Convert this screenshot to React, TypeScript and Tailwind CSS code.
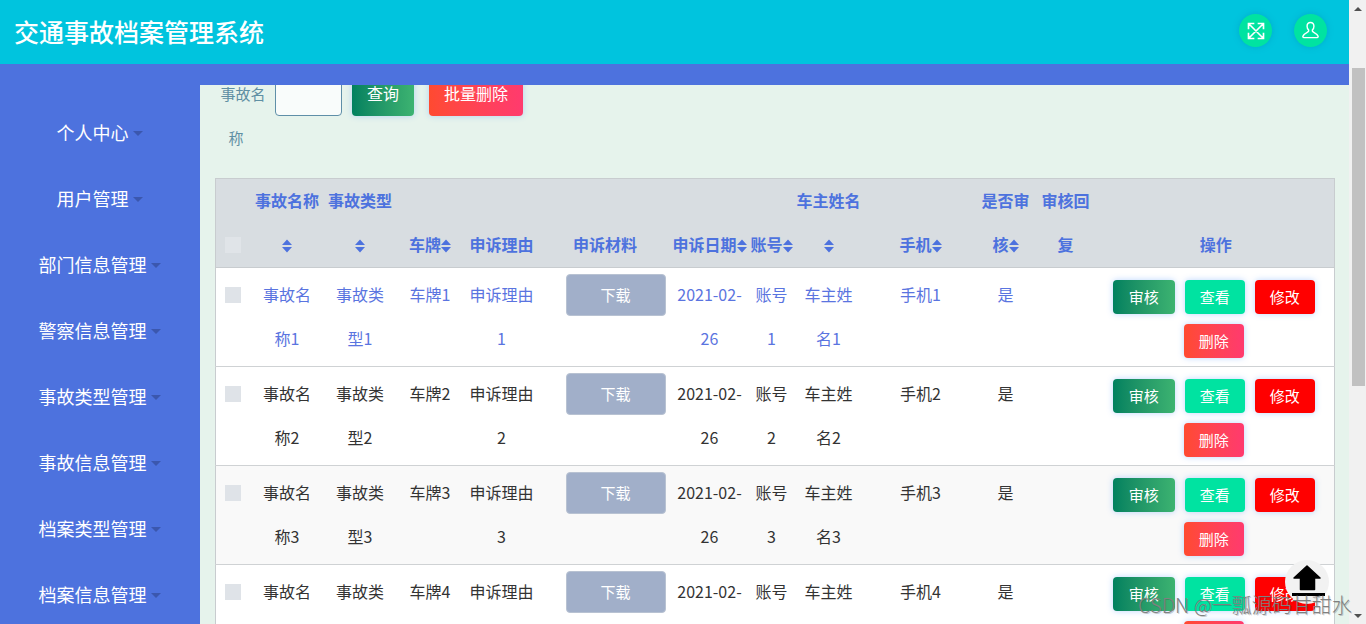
const menus = ['个人中心', '用户管理', '部门信息管理', '警察信息管理', '事故类型管理', '事故信息管理', '档案类型管理', '档案信息管理']
const rows = [1, 2, 3, 4]

function SortIcon() {
  return (
    <svg viewBox="0 0 10 14" className="inline-block w-[10px] h-[14px] align-[-2px] fill-current">
      <path d="M5 0.5 L10 6 H0 Z M0 8 H10 L5 13.5 Z" />
    </svg>
  )
}

function HeadCell({ children }: { children: React.ReactNode }) {
  return <th className="font-bold text-center align-bottom p-0 pb-[1px] leading-[43.5px]">{children}</th>
}

function ActionButton({ label, className }: { label: string; className: string }) {
  return (
    <button className={`h-[34px] pb-[2px] rounded-[4px] text-[15px] leading-none text-white shadow-[0_0_6px_rgba(64,140,255,0.35)] ${className}`}>
      {label}
    </button>
  )
}

function Row({ n }: { n: number }) {
  const rowColor = n === 1 ? 'text-[#5a74e0] bg-white' : n === 3 ? 'text-[#333] bg-[#f9f9f9]' : 'text-[#333] bg-white'
  return (
    <tr className={`h-[99px] border-b border-[#cfd2d4] text-center align-top leading-[44px] ${rowColor}`}>
      <td className="p-0 pl-[9px] pt-[19px] text-left">
        <div className="w-[16px] h-[16px] bg-[#dfe3e8]"></div>
      </td>
      <td className="p-0 pt-[4px]">事故名<br />称{n}</td>
      <td className="p-0 pt-[4px]">事故类<br />型{n}</td>
      <td className="p-0 pt-[4px]">车牌{n}</td>
      <td className="p-0 pt-[4px]">申诉理由<br />{n}</td>
      <td className="p-0 pl-[21px] pt-[6px]">
        <button className="block mx-auto w-[100px] h-[42px] pb-[2px] rounded-[4px] bg-[#a1afc9] border border-[#b8c2d2] text-[15px] leading-none text-white">下载</button>
      </td>
      <td className="p-0 pt-[4px]">2021-02-<br />26</td>
      <td className="p-0 pt-[4px]">账号<br />{n}</td>
      <td className="p-0 pt-[4px]">车主姓<br />名{n}</td>
      <td className="p-0 pt-[4px]">手机{n}</td>
      <td className="p-0 pt-[4px]">是</td>
      <td className="p-0"></td>
      <td className="p-0 pt-[12px] pr-[4px]">
        <div className="flex flex-wrap justify-center gap-[10px] leading-none">
          <ActionButton label="审核" className="w-[62px] bg-gradient-to-r from-[#00815f] to-[#3cb371]" />
          <ActionButton label="查看" className="w-[60px] bg-[#00e3a1]" />
          <ActionButton label="修改" className="w-[60px] bg-[#ff0000]" />
          <ActionButton label="删除" className="w-[60px] bg-gradient-to-r from-[#ff4a30] to-[#ff3a6e]" />
        </div>
      </td>
    </tr>
  )
}

export default function App() {
  return (
    <div className="relative h-[624px] w-[1366px] overflow-hidden flex font-['Noto_Sans_CJK_SC','Liberation_Sans',sans-serif]">
      <div className="w-[1349px] flex flex-col">
        {/* Top bar */}
        <header className="h-[64px] shrink-0 bg-[#00c4de] flex items-center justify-between pl-[14px] pr-[22px]">
          <h1 className="text-[25px] font-medium text-white">交通事故档案管理系统</h1>
          <div className="flex gap-[22px] -mt-[3px]">
            <div className="w-[33px] h-[33px] rounded-full bg-[#00e3a1] shadow-[0_0_6px_rgba(0,130,170,0.35)] flex items-center justify-center text-white">
              <svg viewBox="0 0 24 24" className="w-[20px] h-[20px] fill-none stroke-current stroke-[2]">
                <path d="M3 3 L21 21 M21 3 L3 21 M3 10 V3 H10 M14 3 H21 V10 M3 14 V21 H10 M21 14 V21 H14" />
              </svg>
            </div>
            <div className="w-[33px] h-[33px] rounded-full bg-[#00e3a1] shadow-[0_0_6px_rgba(0,130,170,0.35)] flex items-center justify-center text-white">
              <svg viewBox="0 0 20 20" className="w-[19px] h-[19px] fill-none stroke-current stroke-[1.5]">
                <path d="M10 1.500c-2.300 0-3.600 1.700-3.600 4 0 1.600.6 3 1.600 3.900v1.400c0 .8-4.900 2-6 5.200-.2.7.2 1.500 1 1.500h14c.8 0 1.200-.8 1-1.500-1.100-3.200-6-4.400-6-5.200V9.400c1-.9 1.600-2.300 1.600-3.900 0-2.300-1.300-4-3.600-4z" />
              </svg>
            </div>
          </div>
        </header>
        <div className="h-[21px] shrink-0 bg-[#4d72de]"></div>

        <div className="flex flex-1 min-h-0">
          {/* Sidebar */}
          <aside className="w-[200px] shrink-0 bg-[#4d72de] pt-[14px]">
            {menus.map((m) => (
              <div key={m} className="h-[66px] flex items-center justify-center pr-[1px] text-[18px] text-white">
                {m}
                <span className="ml-[4px] mt-[2px] w-0 h-0 border-x-[5px] border-t-[5px] border-x-transparent border-t-[#3b57ae]"></span>
              </div>
            ))}
          </aside>

          {/* Main content, scrolled under the bar */}
          <main className="flex-1 min-w-0 overflow-hidden bg-[#e6f3ec]">
            <div className="-mt-[13px] pl-[15px]">
              <div className="flex items-start h-[88px] mb-[18px] text-[15px]">
                <label className="w-[50px] ml-[3px] text-center leading-[44px] text-[#5f8fa3]">
                  事故名<br />
                  <span className="inline-block mr-[14px]">称</span>
                </label>
                <input className="ml-[7px] w-[67px] h-[44px] rounded-[4px] border border-[#5f8fa8] bg-[#f9fcfb]" />
                <button className="ml-[10px] w-[62px] h-[44px] pb-[2px] rounded-[4px] text-[16px] leading-none text-white bg-gradient-to-r from-[#00815f] to-[#3cb371] shadow-[0_0_6px_rgba(64,140,255,0.3)]">查询</button>
                <button className="ml-[15px] w-[94px] h-[44px] pb-[2px] rounded-[4px] text-[16px] leading-none text-white bg-gradient-to-r from-[#ff4a30] to-[#ff3a6e] shadow-[0_0_6px_rgba(64,140,255,0.3)]">批量删除</button>
              </div>

              <table className="table-fixed border-collapse w-[1119px] border border-[#c8cccf] text-[16px]">
                <colgroup>
                  <col className="w-[36px]" />
                  <col className="w-[71px]" />
                  <col className="w-[75px]" />
                  <col className="w-[65px]" />
                  <col className="w-[78px]" />
                  <col className="w-[129px]" />
                  <col className="w-[80px]" />
                  <col className="w-[44px]" />
                  <col className="w-[70px]" />
                  <col className="w-[114px]" />
                  <col className="w-[56px]" />
                  <col className="w-[64px]" />
                  <col className="w-[237px]" />
                </colgroup>
                <thead>
                  <tr className="bg-[#d8dde1] text-[#4d72de] border-b border-[#c8cccf]">
                    <th className="p-0 pl-[9px] pb-[14px] align-bottom text-left">
                      <div className="w-[16px] h-[16px] bg-[#e0e4e8]"></div>
                    </th>
                    <HeadCell>事故名称<br /><SortIcon /></HeadCell>
                    <HeadCell>事故类型<br /><SortIcon /></HeadCell>
                    <HeadCell>车牌<SortIcon /></HeadCell>
                    <HeadCell>申诉理由</HeadCell>
                    <HeadCell>申诉材料</HeadCell>
                    <HeadCell>申诉日期<SortIcon /></HeadCell>
                    <HeadCell>账号<SortIcon /></HeadCell>
                    <HeadCell>车主姓名<br /><SortIcon /></HeadCell>
                    <HeadCell>手机<SortIcon /></HeadCell>
                    <HeadCell>是否审<br />核<SortIcon /></HeadCell>
                    <HeadCell>审核回<br />复</HeadCell>
                    <HeadCell>操作</HeadCell>
                  </tr>
                </thead>
                <tbody>
                  {rows.map((n) => (
                    <Row key={n} n={n} />
                  ))}
                </tbody>
              </table>
            </div>
          </main>
        </div>
      </div>

      {/* Page scrollbar */}
      <div className="w-[17px] shrink-0 bg-[#f1f1f1] flex flex-col items-center">
        <div className="h-[17px] flex items-center">
          <div className="w-0 h-0 border-x-[4px] border-b-[4px] border-x-transparent border-b-[#505050]"></div>
        </div>
        <div className="mt-[51px] w-[13px] h-[318px] ml-[1px] bg-[#c1c1c1]"></div>
        <div className="mt-auto h-[17px] flex items-center">
          <div className="w-0 h-0 border-x-[4px] border-t-[4px] border-x-transparent border-t-[#505050]"></div>
        </div>
      </div>

      {/* Back to top */}
      <div className="absolute left-[1285px] top-[560px] w-[44px] h-[44px] rounded-full bg-[#f2f2f2]">
        <svg viewBox="0 0 44 44" className="w-[44px] h-[44px]">
          <path d="M22 6 L35 18 H29.500 V29.500 H15.500 V18 H9 Z" fill="#000" stroke="#000" strokeWidth="1.500" strokeLinejoin="round" />
          <rect x="7" y="33" width="33" height="3" fill="#000" />
        </svg>
      </div>

      {/* Watermark */}
      <div className="absolute left-[1138px] top-[592px] text-[20px] leading-[26px] font-light text-[#808080] whitespace-nowrap [text-shadow:1px_1px_0_rgba(60,60,60,0.25)]">
        CSDN @一瓢源码甘甜水
      </div>
    </div>
  )
}
